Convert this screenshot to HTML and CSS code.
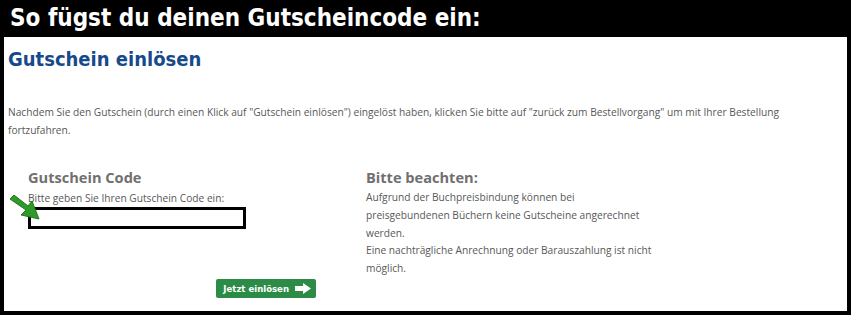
FILE: index.html
```html
<!DOCTYPE html>
<html lang="de">
<head>
    <meta charset="UTF-8">
    <title>Gutschein einlösen</title>
    <link rel="stylesheet" href="styles.css">
</head>
<body>
    <div class="frame">
        <h1 class="title">So fügst du deinen Gutscheincode ein:</h1>
        <div class="panel">
            <h2 class="heading">Gutschein einlösen</h2>
            <p class="intro">Nachdem Sie den Gutschein (durch einen Klick auf "Gutschein einlösen") eingelöst haben, klicken Sie bitte auf "zurück zum Bestellvorgang" um mit Ihrer Bestellung<br>fortzufahren.</p>
            <div class="columns">
                <div class="col-left">
                    <h3 class="sub">Gutschein Code</h3>
                    <label class="label" for="code">Bitte geben Sie Ihren Gutschein Code ein:</label>
                    <div class="field">
                        <svg class="pointer" width="34" height="26" viewBox="0 0 34 26">
                            <path d="M0 4 L4 0 L18 11 L22 6 L29 24 L11 20 L16 15 Z" fill="#2f9a2a" stroke="#1f7a1c" stroke-width="1"/>
                        </svg>
                        <input id="code" class="input" type="text">
                    </div>
                    <div class="actions">
                        <button class="btn">Jetzt einlösen
                            <svg width="16" height="11" viewBox="0 0 16 11">
                                <path d="M0 3 H8 V0 L16 5.5 L8 11 V8 H0 Z" fill="#fff"/>
                            </svg>
                        </button>
                    </div>
                </div>
                <div class="col-right">
                    <h3 class="sub">Bitte beachten:</h3>
                    <p class="note">Aufgrund der Buchpreisbindung können bei<br>preisgebundenen Büchern keine Gutscheine angerechnet<br>werden.<br>Eine nachträgliche Anrechnung oder Barauszahlung ist nicht<br>möglich.</p>
                </div>
            </div>
        </div>
    </div>
</body>
</html>
```

FILE: styles.css
```css
*{
    margin: 0;
    padding: 0;
    box-sizing: border-box;
}
body{
    background: #000;
    width: 851px;
    height: 315px;
    overflow: hidden;
}
.frame{
    padding: 0 4px 4px 4px;
}
.title{
    height: 37px;
    padding: 5px 0 0 6px;
    color: #fff;
    font-family: "DejaVu Sans Condensed", "DejaVu Sans", sans-serif;
    font-weight: bold;
    font-size: 24px;
    line-height: 26px;
}
.panel{
    background: #fff;
    height: 274px;
    padding: 9px 4px 0 4px;
    font-family: "Open Sans", sans-serif;
    color: #585858;
}
.heading{
    color: #174a8b;
    font-family: "DejaVu Sans Condensed", "DejaVu Sans", sans-serif;
    font-size: 20px;
    line-height: 26px;
    font-weight: bold;
}
.intro{
    margin-top: 32px;
    font-size: 10.2px;
    line-height: 17.5px;
    white-space: nowrap;
}
.columns{
    display: flex;
    margin-top: 28px;
    padding-left: 20px;
    gap: 50px;
}
.col-left{
    width: 288px;
}
.sub{
    font-size: 14.6px;
    line-height: 20px;
    color: #707070;
    font-weight: bold;
    margin-bottom: 2px;
}
.label{
    display: block;
    font-size: 10.2px;
    line-height: 18px;
}
.field{
    position: relative;
    margin-top: 0;
}
.pointer{
    position: absolute;
    left: -18px;
    top: -12px;
}
.input{
    display: block;
    width: 218px;
    height: 22px;
    border: 3px solid #000;
    outline: none;
}
.actions{
    display: flex;
    justify-content: flex-end;
    margin-top: 50px;
}
.btn{
    display: flex;
    align-items: center;
    gap: 6px;
    height: 19px;
    padding: 0 5px 0 7px;
    background: #2c8c47;
    color: #fff;
    border: none;
    border-radius: 2px;
    font-family: "DejaVu Sans Condensed", "DejaVu Sans", sans-serif;
    font-weight: bold;
    font-size: 9.5px;
}
.note{
    font-size: 10.2px;
    line-height: 17.8px;
    white-space: nowrap;
}
```
